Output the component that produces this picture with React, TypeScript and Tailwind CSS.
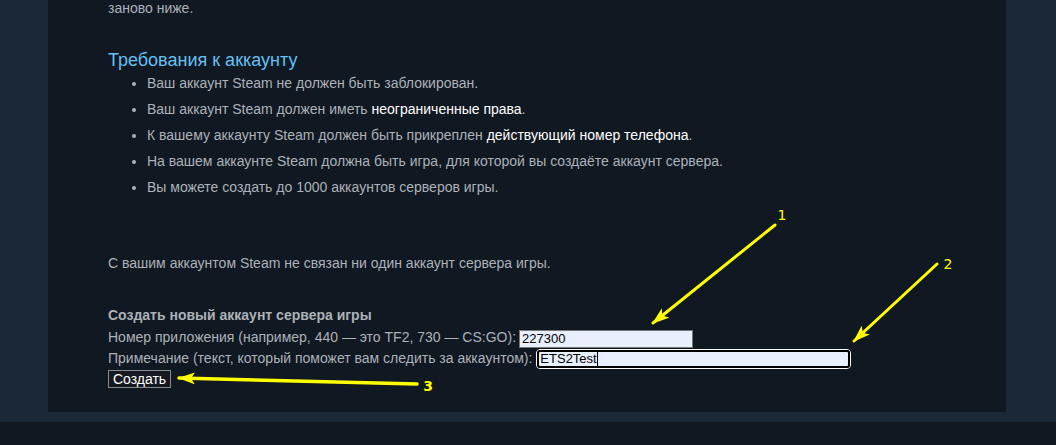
export default function App() {
    return (
        <div className="relative w-full h-[445px] overflow-hidden bg-[#1b2838] font-['Liberation_Sans',Arial,sans-serif] text-[14px] text-[#acb2b8]">

            {/* Центральная панель */}
            <div className="ml-[48px] w-[958px] h-[412px] bg-[#101822] flex flex-col pl-[60px]">
                <p className="-mt-[2px] leading-[20px]">заново ниже.</p>

                <h2 className="mt-[31px] text-[18px] leading-[22px] text-[#66c0f4]">Требования к аккаунту</h2>
                <ul className="mt-[2px] pl-[39px] list-disc space-y-[6px] marker:text-[#acb2b8]">
                    <li className="leading-[20px]">Ваш аккаунт Steam не должен быть заблокирован.</li>
                    <li className="leading-[20px]">Ваш аккаунт Steam должен иметь <span className="text-white">неограниченные права</span>.</li>
                    <li className="leading-[20px]">К вашему аккаунту Steam должен быть прикреплен <span className="text-white">действующий номер телефона</span>.</li>
                    <li className="leading-[20px]">На вашем аккаунте Steam должна быть игра, для которой вы создаёте аккаунт сервера.</li>
                    <li className="leading-[20px]">Вы можете создать до 1000 аккаунтов серверов игры.</li>
                </ul>

                <p className="mt-[56px] leading-[20px]">С вашим аккаунтом Steam не связан ни один аккаунт сервера игры.</p>

                {/* Форма */}
                <div className="mt-[32px] leading-[20px] font-bold">Создать новый аккаунт сервера игры</div>
                <div className="mt-[5px] h-[18px] flex items-start gap-[3px]">
                    <span className="leading-[14px]">Номер приложения (например, 440 — это TF2, 730 — CS:GO):</span>
                    <div className="w-[174px] h-[18px] border border-[#767676] bg-[#e8f0fe] text-black text-[13px] leading-[16px] pl-[2px]">227300</div>
                </div>
                <div className="mt-[1px] h-[20px] flex items-start gap-[4px]">
                    <span className="leading-[18px]">Примечание (текст, который поможет вам следить за аккаунтом):</span>
                    <div className="w-[315px] h-[20px] border border-white rounded-[4px]">
                        <div className="h-full border-2 border-black rounded-[3px] bg-[#e8f0fe] text-black text-[13px] leading-[14px] pl-[1px] flex items-center">
                            ETS2Test<span className="inline-block w-px h-[15px] bg-black" />
                        </div>
                    </div>
                </div>
                <button className="mt-[1px] w-[63px] h-[18px] border border-[#8b8b8b] bg-[#16191f] text-white text-[14px] leading-[16px] text-center">Создать</button>
            </div>

            {/* Подвал */}
            <div className="mt-[10px] h-[23px] bg-[#111821]" />

            {/* Стрелки-пометки */}
            <svg className="absolute inset-0 w-full h-full pointer-events-none" viewBox="0 0 1056 445">
                <defs>
                    <marker id="head" markerUnits="userSpaceOnUse" markerWidth="18" markerHeight="12" refX="16" refY="6" orient="auto">
                        <path d="M0,0 L17,6 L0,12 L4,6 z" fill="#ffff00" />
                    </marker>
                </defs>
                <line x1="775" y1="225" x2="653" y2="323" stroke="#ffff00" strokeWidth="3" strokeLinecap="round" markerEnd="url(#head)" />
                <line x1="937" y1="264" x2="854" y2="341" stroke="#ffff00" strokeWidth="3" strokeLinecap="round" markerEnd="url(#head)" />
                <line x1="417" y1="384" x2="179" y2="378" stroke="#ffff00" strokeWidth="3.5" strokeLinecap="round" markerEnd="url(#head)" />
                <text x="782" y="220" fill="#ffff00" fontSize="14" textAnchor="middle" fontFamily="DejaVu Sans, sans-serif">1</text>
                <text x="948" y="269" fill="#ffff00" fontSize="14" textAnchor="middle" fontFamily="DejaVu Sans, sans-serif">2</text>
                <text x="428" y="391" fill="#ffff00" fontSize="14" fontWeight="bold" textAnchor="middle" fontFamily="DejaVu Sans, sans-serif">3</text>
            </svg>
        </div>
    );
}
